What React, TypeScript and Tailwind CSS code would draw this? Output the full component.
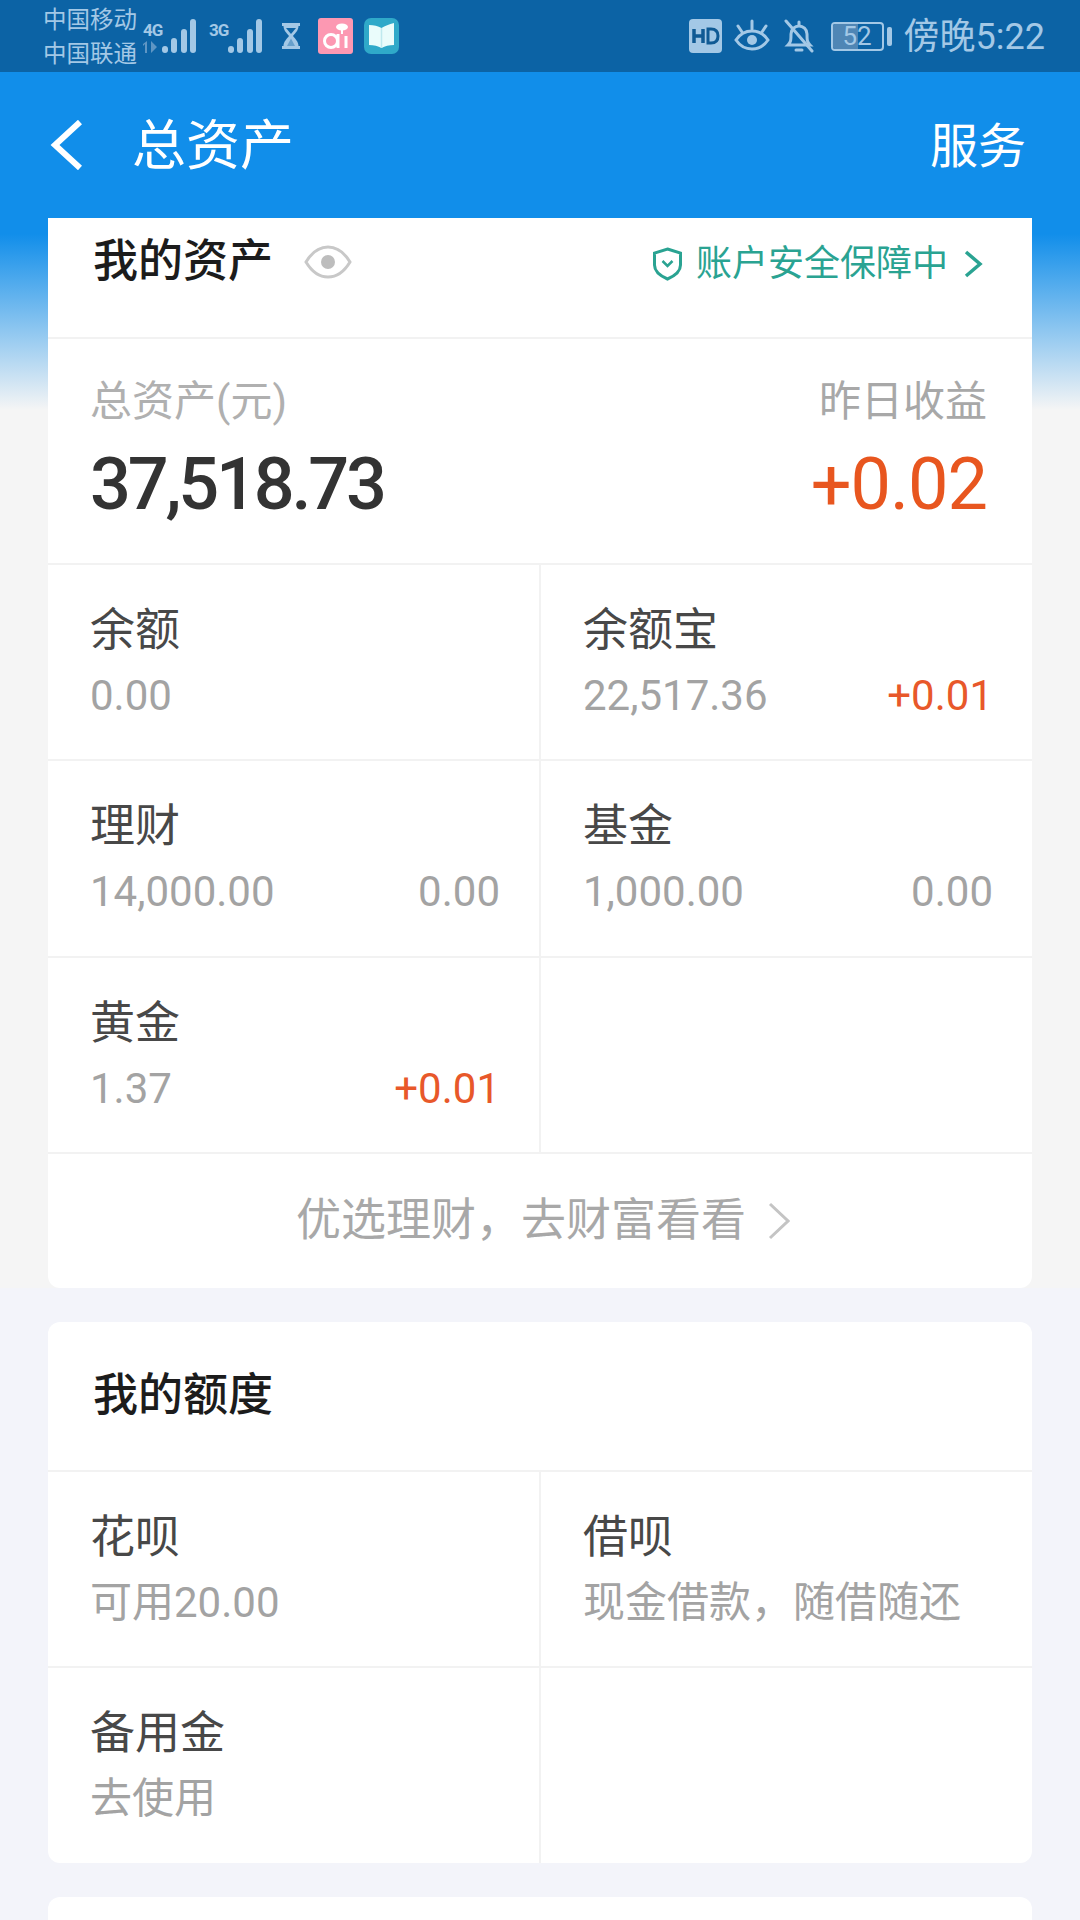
interface CellProps {
  label?: string;
  value?: string;
  delta?: string;
  up?: boolean;
  right?: boolean;
}

const Cell = ({ label, value, delta, up, right }: CellProps) => (
  <div
    className={`border-t-2 border-[#f2f2f2] pl-[42px] pr-[39px] pt-[41px] ${
      right ? "" : "border-r-2"
    }`}
  >
    {label && (
      <>
        <div className="text-[45px] leading-[50px] text-[#484848]">{label}</div>
        <div className="mt-[17px] flex justify-between text-[42px] leading-[46px] text-[#a3a3a3]">
          <span>{value}</span>
          {delta && (
            <span className={up ? "text-[#e8582a]" : ""}>{delta}</span>
          )}
        </div>
      </>
    )}
  </div>
);

const Signal = ({ tag, roaming }: { tag: string; roaming?: boolean }) => (
  <div className="relative h-[36px] w-[54px]">
    <span className="absolute left-0 top-[3px] text-[17px] font-bold leading-[18px] tracking-[-1px] text-[#a3c8e6]">
      {tag}
    </span>
    {roaming && (
      <svg className="absolute left-0 top-[23px]" width="16" height="12" viewBox="0 0 16 12" fill="#5f96c4">
        <path d="M4 0v12H2V3L0 5V3zM8 0l6 6-6 6z" />
      </svg>
    )}
    <svg
      className="absolute right-0 top-0"
      width="36"
      height="36"
      viewBox="0 0 36 36"
      fill="#a3c8e6"
    >
      <rect x="1" y="28" width="6" height="7" rx="3" />
      <rect x="10" y="20" width="6" height="15" rx="3" />
      <rect x="20" y="11" width="6" height="24" rx="3" />
      <rect x="29" y="1" width="6" height="34" rx="3" />
    </svg>
  </div>
);

const StatusBar = () => (
  <div className="flex h-[72px] items-center bg-[#0c63a5] pl-[43px] pr-[35px] text-[#a3c8e6]">
    <div className="mt-[2px] w-[97px] text-[23.5px] leading-[34px]">
      <div>中国移动</div>
      <div>中国联通</div>
    </div>
    <div className="ml-[3px] flex items-center gap-[12px]">
      <Signal tag="4G" roaming />
      <Signal tag="3G" />
    </div>
    <svg className="ml-[18px]" width="20" height="26" viewBox="0 0 20 26" fill="#a3c8e6">
      <path d="M1 0h18v3h-1.500c0 4-3 7-5.500 10 2.500 3 5.500 6 5.500 10H19v3H1v-3h1.500c0-4 3-7 5.500-10C5.500 10 2.500 7 2.500 3H1z" />
      <path d="M5 5h10l-5 6z" fill="#0c63a5" />
      <path d="M10 15.500l-4 7.500h8z" fill="#0c63a5" opacity="0.4" />
    </svg>
    <svg className="ml-[17px]" width="35" height="36" viewBox="0 0 35 36">
      <rect width="35" height="36" rx="3" fill="#fc98b2" />
      <circle cx="13" cy="23" r="6.500" fill="none" stroke="#fff" strokeWidth="3" />
      <path d="M20 16v14M28 18v12" stroke="#fff" strokeWidth="3" />
      <ellipse cx="24" cy="9" rx="6" ry="3.500" fill="#fff" />
      <path d="M24 12v4" stroke="#fff" strokeWidth="2" />
    </svg>
    <svg className="ml-[11px]" width="35" height="36" viewBox="0 0 35 36">
      <rect width="35" height="36" rx="7" fill="#2fa9c9" />
      <path d="M5 7c5 0 9 1 12.500 3C21 8 25 6 30 5v22c-5 0-9 1-12.500 3C14 28 10 27 5 27z" fill="#eafcfb" />
      <path d="M17.500 10v20" stroke="#bfe9ee" strokeWidth="1.500" />
    </svg>
    <svg className="ml-auto" width="33" height="34" viewBox="0 0 33 34">
      <rect width="33" height="34" rx="4" fill="#a3c8e6" />
      <path d="M5 10v14M14 10v14M5 17h9" stroke="#0f5a94" strokeWidth="3.500" fill="none" />
      <path d="M19 10v14h3c5 0 7-3 7-7s-2-7-7-7z" stroke="#0f5a94" strokeWidth="3" fill="none" />
    </svg>
    <svg className="ml-[12px]" width="36" height="34" viewBox="0 0 36 34" fill="none" stroke="#a3c8e6" strokeWidth="3">
      <path d="M2 21c4-6 9-9 16-9s12 3 16 9c-4 6-9 9-16 9s-12-3-16-9z" />
      <circle cx="18" cy="21" r="5" fill="#a3c8e6" stroke="none" />
      <path d="M18 10V2M8 13L4 7M28 13l4-6" strokeLinecap="round" />
    </svg>
    <svg className="ml-[14px]" width="30" height="34" viewBox="0 0 30 34" fill="none" stroke="#a3c8e6" strokeWidth="3">
      <path d="M4 26c3-3 3-5 3-11 0-5 4-8 8-8s8 3 8 8c0 6 0 8 3 11z" />
      <path d="M15 3v3M12 31h6" strokeLinecap="round" />
      <path d="M2 2l26 30" strokeLinecap="round" />
    </svg>
    <div className="ml-[17px] flex items-center">
      <div className="relative flex h-[29px] w-[53px] items-center justify-center overflow-hidden rounded-[4px] border-2 border-[#a3c8e6] text-[26px] leading-none">
        <div className="absolute inset-y-0 left-0 w-[52%] bg-[#4f86b5]" />
        <span className="relative">52</span>
      </div>
      <div className="ml-[3px] h-[19px] w-[5px] rounded-[2px] bg-[#a3c8e6]" />
    </div>
    <div className="ml-[12px] mt-[2px] text-[36px] leading-none">傍晚5:22</div>
  </div>
);

const NavBar = () => (
  <div className="flex h-[146px] items-center bg-[#118eea] pl-[50px] pr-[54px] text-white">
    <svg width="32" height="50" viewBox="0 0 32 50" fill="none" stroke="#fff" strokeWidth="6">
      <path d="M30 2L5 25l25 23" />
    </svg>
    <div className="ml-[50px] mt-[3px] text-[54px] leading-none">总资产</div>
    <div className="ml-auto mt-[4px] text-[48px] leading-none">服务</div>
  </div>
);

const App = () => {
  return (
    <div className="h-[1920px] overflow-hidden bg-[#f3f4fa] font-['Roboto','Noto_Sans_CJK_SC',sans-serif]">
      <StatusBar />
      <NavBar />

      {/* first card sits on the blue fade */}
      <div className="bg-[linear-gradient(180deg,#118eea_16px,#f5f5f5_192px)] px-[48px]">
        <div className="overflow-hidden rounded-b-[12px] bg-white">
          <div className="flex h-[119px] items-start pl-[45px] pr-[49px] pt-[19px]">
            <div className="text-[45px] font-medium leading-[50px] text-[#1c1c1c]">我的资产</div>
            <svg className="ml-[31px] mt-[8px]" width="48" height="34" viewBox="0 0 48 34" fill="none">
              <path d="M2 17C8 7 15 2 24 2s16 5 22 15c-6 10-13 15-22 15S8 27 2 17z" stroke="#c8c8c8" strokeWidth="3" />
              <circle cx="24" cy="17" r="7" fill="#bdbdbd" />
            </svg>
            <div className="ml-auto mt-[5px] flex items-center text-[#2aa392]">
              <svg width="31" height="34" viewBox="0 0 31 34" fill="none" stroke="#2aa392" strokeWidth="3">
                <path d="M15.500 2l13 4v12c0 6-6 11-13 14C8.500 29 2.500 24 2.500 18V6z" />
                <path d="M10.500 14l5 5 5-5" strokeWidth="2.500" />
              </svg>
              <span className="ml-[13px] text-[36px] leading-[44px]">账户安全保障中</span>
              <svg className="ml-[15px]" width="20" height="30" viewBox="0 0 20 30" fill="none" stroke="#2aa392" strokeWidth="3.500">
                <path d="M3 3l14 12L3 27" />
              </svg>
            </div>
          </div>

          <div className="flex h-[226px] justify-between border-t-2 border-[#f2f2f2] pl-[42px] pr-[45px] pt-[38px]">
            <div>
              <div className="text-[42px] leading-[50px] text-[#b0b0b0]">总资产(元)</div>
              <div className="mt-[18px] text-[72px] font-medium leading-[80px] tracking-[-3.2px] text-[#333333]">
                37,518.73
              </div>
            </div>
            <div className="text-right">
              <div className="text-[42px] leading-[50px] text-[#a8a8a8]">昨日收益</div>
              <div className="mt-[18px] text-[72px] leading-[80px] tracking-[-1px] text-[#e8561f]">
                +0.02
              </div>
            </div>
          </div>

          <div className="grid grid-cols-[493px_1fr] auto-rows-[196.33px]">
            <Cell label="余额" value="0.00" />
            <Cell label="余额宝" value="22,517.36" delta="+0.01" up right />
            <Cell label="理财" value="14,000.00" delta="0.00" />
            <Cell label="基金" value="1,000.00" delta="0.00" right />
            <Cell label="黄金" value="1.37" delta="+0.01" up />
            <Cell right />
          </div>

          <div className="flex h-[136px] items-center justify-center gap-[22px] border-t-2 border-[#f2f2f2] pl-[6px] text-[45px] text-[#a8a8a8]">
            <span className="leading-[50px]">优选理财，去财富看看</span>
            <svg width="22" height="38" viewBox="0 0 22 38" fill="none" stroke="#c4c4c4" strokeWidth="3">
              <path d="M2 2l18 17L2 36" />
            </svg>
          </div>
        </div>
      </div>

      <div className="flex flex-col gap-[34px] px-[48px] pt-[34px]">
        <div className="overflow-hidden rounded-[12px] bg-white">
          <div className="flex h-[148px] items-center pl-[45px] text-[45px] font-medium text-[#1c1c1c]">
            我的额度
          </div>
          <div className="grid grid-cols-[493px_1fr] auto-rows-[196.33px]">
            <Cell label="花呗" value="可用20.00" />
            <Cell label="借呗" value="现金借款，随借随还" right />
            <Cell label="备用金" value="去使用" />
            <Cell right />
          </div>
        </div>
        <div className="h-[60px] rounded-t-[12px] bg-white" />
      </div>
    </div>
  );
};

export default App;
